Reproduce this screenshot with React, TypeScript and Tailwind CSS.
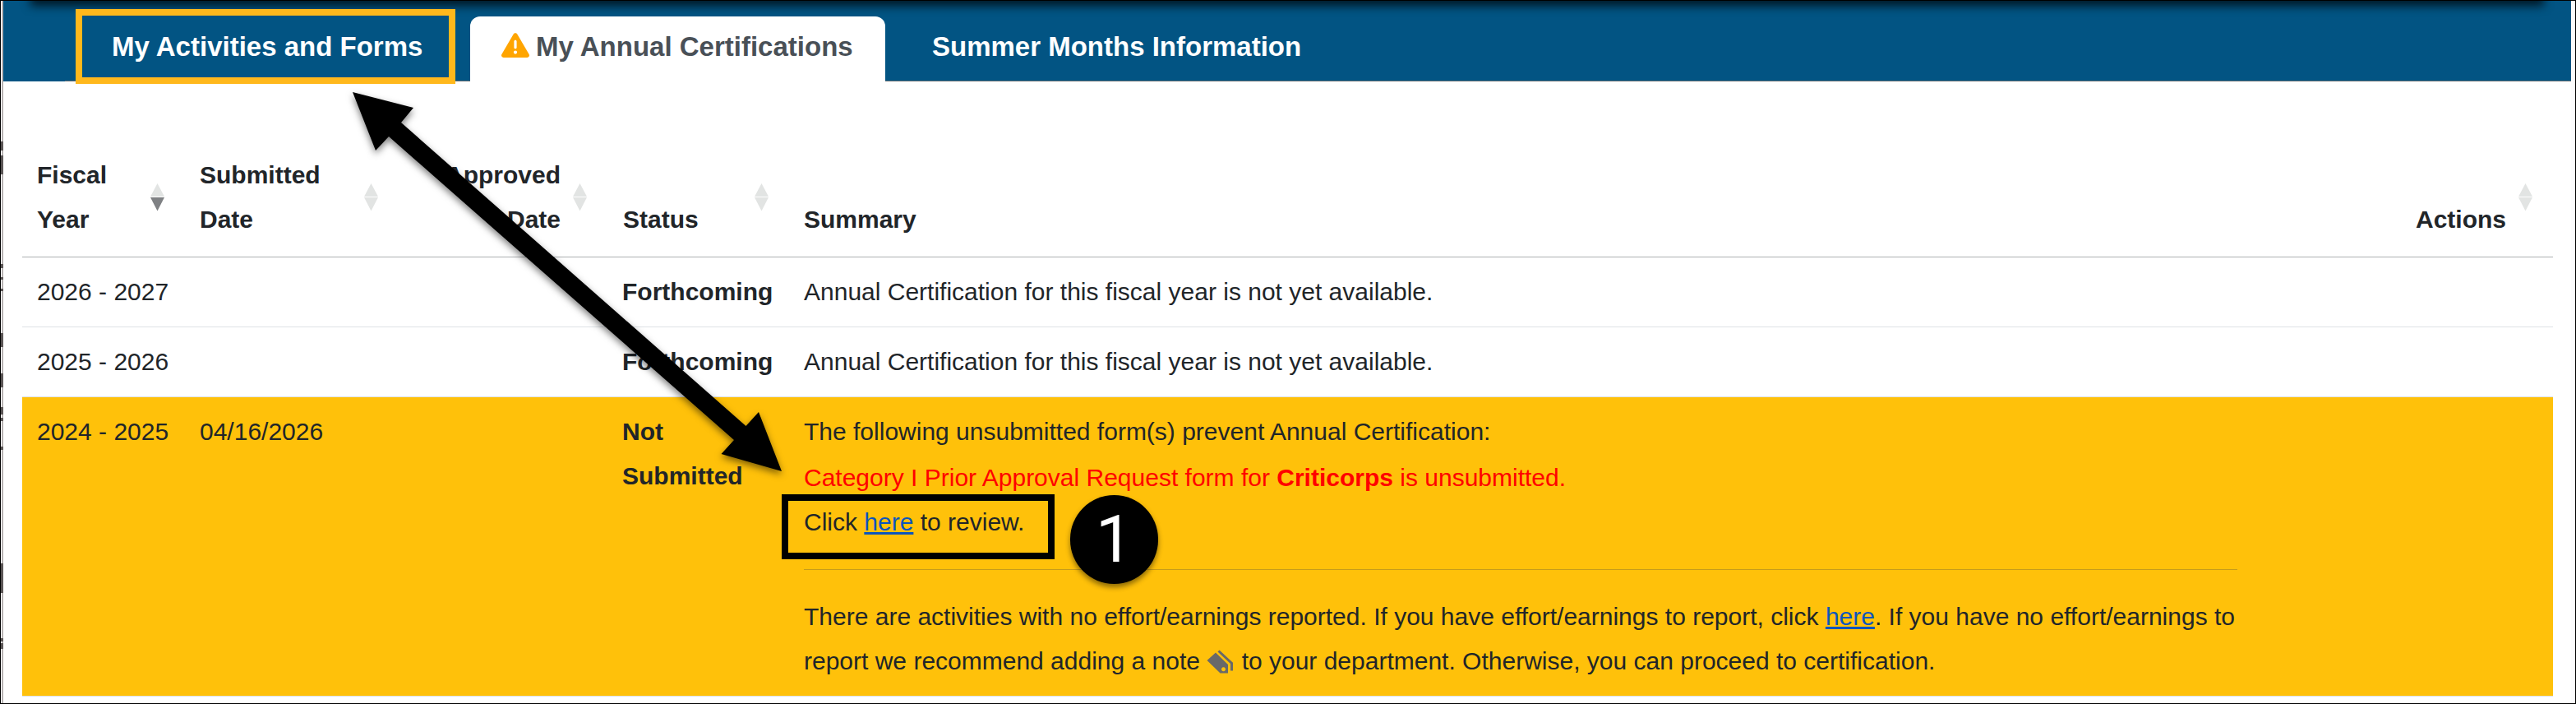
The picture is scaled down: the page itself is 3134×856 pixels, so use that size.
import React from "react";
import { FaTriangleExclamation } from "react-icons/fa6";

type SortState = "none" | "desc";

function SortArrows({ state = "none" }: { state?: SortState }) {
  return (
    <svg viewBox="0 0 17 34" className="h-[34px] w-[17px] shrink-0">
      <path d="M8.5 0 L17 16 H0 Z" fill="#e2e4e3" />
      <path d="M0 17 H17 L8.5 33.5 Z" fill={state === "desc" ? "#7f8184" : "#e2e4e3"} />
    </svg>
  );
}

function TagIcon() {
  return (
    <svg viewBox="0 0 33 29" className="mr-px inline-block h-[29px] w-[33px] align-[-5px]">
      <path
        fillRule="evenodd"
        fill="#696969"
        d="M0.500 13 L11 3.500 L26 18 V28.500 H16.500 Z M20.500 21.200 a2.500 2.500 0 1 0 .01 0 Z"
      />
      <path d="M14.500 1.500 L30.500 16.500 V25.500" fill="none" stroke="#696969" strokeWidth="3" />
    </svg>
  );
}

function HeaderCell({
  children,
  className = "",
  sort,
}: {
  children: React.ReactNode;
  className?: string;
  sort?: SortState;
}) {
  return (
    <div className={"relative flex items-end pb-[18px] font-bold " + className}>
      <div>{children}</div>
      {sort && (
        <div className="absolute top-[37px] right-0 flex">
          <SortArrows state={sort} />
        </div>
      )}
    </div>
  );
}

const upcoming = ["2026 - 2027", "2025 - 2026"];

const edgeMarks = [
  [172, 11],
  [189, 23],
  [321, 5],
  [337, 3],
  [351, 3],
  [405, 17],
  [454, 13],
  [467, 4],
  [495, 9],
  [508, 4],
  [543, 4],
  [685, 36],
  [776, 4],
  [782, 7],
];

export default function App() {
  return (
    <div className="relative h-[856px] w-[3134px] overflow-hidden border border-black bg-white font-['Liberation_Sans',Arial,sans-serif] text-[30px] leading-[54px] text-[#212529]">
      <div className="flex h-full">
        <div className="w-[3px] shrink-0 border-r-2 border-[#b5b1b1]" />
        <div className="flex w-[3124px] flex-col">
          <nav className="relative flex h-[98px] shrink-0 bg-[#025483] text-[33px] font-bold text-white">
            <div className="absolute inset-x-[36px] top-[-10px] h-[10px] shadow-[0_3px_12px_3px_rgba(0,0,0,0.75)]" />
            <div className="absolute right-0 bottom-0 left-[75px] h-px bg-[#636a6e]" />
            <div className="relative mt-[10px] ml-[88px] h-[91px] w-[462px] border-8 border-[#ffb81c] pt-[11px] pl-[36px] whitespace-nowrap">
              My Activities and Forms
            </div>
            <div className="relative mt-[19px] ml-[18px] flex h-[79px] w-[505px] rounded-t-[12px] bg-white pt-[10px] pl-[38px] whitespace-nowrap text-[#495057]">
              <FaTriangleExclamation className="mt-[8px] mr-[8px] h-[34px] w-[34px] shrink-0 text-[#ffa500]" />
              My Annual Certifications
            </div>
            <div className="relative mt-[29px] ml-[57px] whitespace-nowrap">Summer Months Information</div>
          </nav>

          <main className="ml-[23px] w-[3079px] pt-[87px]">
            <div className="flex h-[127px] border-b border-[#adb0b2]">
              <HeaderCell className="w-[173px] pl-[18px]" sort="desc">
                Fiscal
                <br />
                Year
              </HeaderCell>
              <HeaderCell className="w-[260px] pl-[43px]" sort="none">
                Submitted
                <br />
                Date
              </HeaderCell>
              <HeaderCell className="w-[254px] justify-end pr-[32px] text-right" sort="none">
                Approved
                <br />
                Date
              </HeaderCell>
              <HeaderCell className="w-[221px] pl-[44px]" sort="none">
                Status
              </HeaderCell>
              <HeaderCell className="w-[1900px] pl-[43px]">Summary</HeaderCell>
              <HeaderCell className="w-[246px] justify-end pr-[32px]" sort="none">
                Actions
              </HeaderCell>
            </div>

            {upcoming.map((year) => (
              <div key={year} className="flex h-[85px] border-b border-[#dee2e6] pt-[15px] pl-[18px]">
                <div className="w-[712px]">{year}</div>
                <div className="w-[221px] font-bold">Forthcoming</div>
                <div>Annual Certification for this fiscal year is not yet available.</div>
              </div>
            ))}

            <div className="flex h-[364px] border-b border-[#dee2e6] bg-[#ffc10a] pt-[15px] pl-[18px]">
              <div className="w-[198px]">2024 - 2025</div>
              <div className="w-[514px]">04/16/2026</div>
              <div className="w-[221px] font-bold">
                Not
                <br />
                Submitted
              </div>
              <div className="w-[1744px] whitespace-nowrap">
                <p>The following unsubmitted form(s) prevent Annual Certification:</p>
                <p className="pt-[2px] text-[#ff0000]">
                  Category I Prior Approval Request form for <b>Criticorps</b> is unsubmitted.
                </p>
                <p>
                  Click{" "}
                  <a className="text-[#0b55bd] underline" href="#">
                    here
                  </a>{" "}
                  to review.
                </p>
                <hr className="my-[30px] border-t border-[#c79c1a]" />
                <p>
                  There are activities with no effort/earnings reported. If you have effort/earnings to report, click{" "}
                  <a className="text-[#0b55bd] underline" href="#">
                    here
                  </a>
                  . If you have no effort/earnings to
                  <br />
                  report we recommend adding a note <TagIcon /> to your department. Otherwise, you can proceed to
                  certification.
                </p>
              </div>
            </div>
          </main>
        </div>
        <div className="grow bg-[#fcfcfd]" />
      </div>

      <svg viewBox="0 0 3134 856" className="pointer-events-none absolute -top-px -left-px h-[856px] w-[3134px] max-w-none">
        {edgeMarks.map(([y, h]) => (
          <rect key={y} x="1" y={y} width="3" height={h} fill="#5a5555" />
        ))}
        <path
          d="M429 112 L503 131 L488 149 L907.500 518 L923 501 L951 573 L877.500 552 L893 535 L473 166 L457 183 Z"
          fill="#000"
          className="drop-shadow-[0_4px_4px_rgba(0,0,0,0.5)]"
        />
      </svg>
      <div className="absolute top-[600px] left-[950px] h-[79px] w-[332px] border-8 border-black" />
      <div className="absolute top-[601px] left-[1301px] flex h-[108px] w-[107px] items-center justify-center rounded-full bg-black font-[Roboto,sans-serif] text-[80px] text-white shadow-[0_4px_6px_rgba(0,0,0,0.45)]">
        1
      </div>
    </div>
  );
}
